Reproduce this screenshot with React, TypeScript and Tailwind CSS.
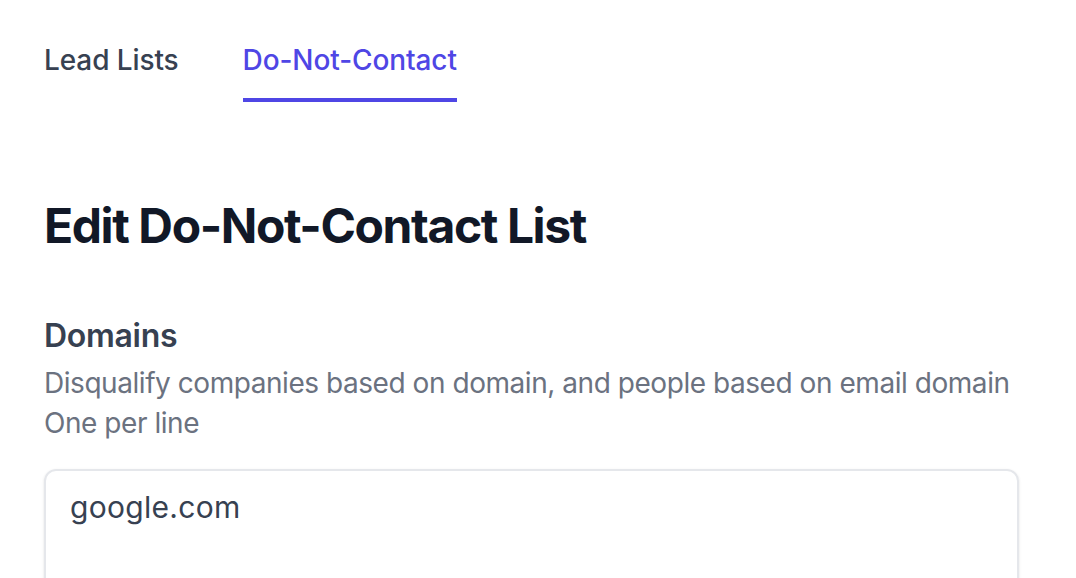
import React, { useState } from 'react';

const tabs = ['Lead Lists', 'Do-Not-Contact'];

export default function App() {
  const [active, setActive] = useState(1);
  const [domains, setDomains] = useState('google.com');

  return (
    <div className="min-h-screen bg-white px-[44px] pt-[40px] font-['Inter','Noto_Sans',sans-serif]">
      <nav className="flex gap-[64px]" aria-label="Tabs">
        {tabs.map((tab, index) => (
          <button
            key={tab}
            onClick={() => setActive(index)}
            className={`border-b-4 pb-[18px] text-[28px] leading-[40px] font-medium tracking-[-0.1px] ${
              index === active
                ? 'border-[#4f46e5] text-[#4f46e5]'
                : 'border-transparent text-[#374151]'
            }`}
          >
            {tab}
          </button>
        ))}
      </nav>

      <h1 className="mt-[92px] text-[48px] leading-[64px] font-bold tracking-[-1.4px] text-[#111827]">
        Edit Do-Not-Contact List
      </h1>

      <div className="mt-[56px]">
        <label htmlFor="domains" className="block text-[32px] leading-[44px] font-semibold tracking-[-0.3px] text-[#374151]">
          Domains
        </label>
        <p className="mt-[5px] text-[28px] leading-[40px] tracking-[-0.45px] text-[#6b7280]">
          Disqualify companies based on domain, and people based on email domain
          <br />
          One per line
        </p>
        <textarea
          id="domains"
          value={domains}
          onChange={(e) => setDomains(e.target.value)}
          rows={6}
          className="mt-[26px] block w-[975px] resize-none rounded-[12px] border-2 border-[#e5e7eb] px-[24px] py-[14px] text-[30px] leading-[44px] tracking-[0.3px] text-[#374151] shadow-sm outline-none"
        />
      </div>
    </div>
  );
}
